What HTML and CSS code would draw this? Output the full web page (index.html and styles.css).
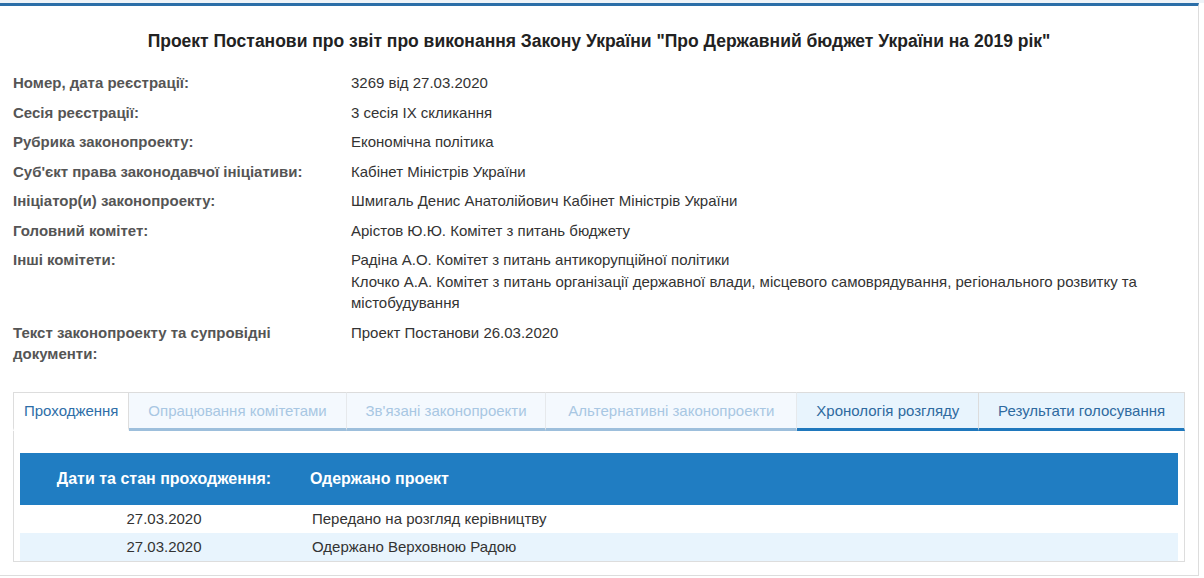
FILE: index.html
```html
<!DOCTYPE html>
<html lang="uk">
<head>
    <meta charset="UTF-8">
    <meta name="viewport" content="width=device-width, initial-scale=1.0">
    <title>Картка законопроекту</title>
    <link rel="stylesheet" href="styles.css">
</head>
<body>
    <div class="page">
        <div class="bill-card">
            <h1 class="bill-title">Проект Постанови про звіт про виконання Закону України "Про Державний бюджет України на 2019 рік"</h1>

            <!-- Основні дані -->
            <div class="bill-info">
                <div class="info-label">Номер, дата реєстрації:</div>
                <div class="info-value">3269 від 27.03.2020</div>

                <div class="info-label">Сесія реєстрації:</div>
                <div class="info-value">3 сесія IX скликання</div>

                <div class="info-label">Рубрика законопроекту:</div>
                <div class="info-value">Економічна політика</div>

                <div class="info-label">Суб'єкт права законодавчої ініціативи:</div>
                <div class="info-value">Кабінет Міністрів України</div>

                <div class="info-label">Ініціатор(и) законопроекту:</div>
                <div class="info-value">Шмигаль Денис Анатолійович Кабінет Міністрів України</div>

                <div class="info-label">Головний комітет:</div>
                <div class="info-value">Арістов Ю.Ю. Комітет з питань бюджету</div>

                <div class="info-label">Інші комітети:</div>
                <div class="info-value">
                    Радіна А.О. Комітет з питань антикорупційної політики<br>
                    Клочко А.А. Комітет з питань організації державної влади, місцевого самоврядування, регіонального розвитку та містобудування
                </div>

                <div class="info-label">Текст законопроекту та супровідні документи:</div>
                <div class="info-value">Проект Постанови 26.03.2020</div>
            </div>

            <!-- Вкладки -->
            <div class="tabs">
                <div class="tab active">Проходження</div>
                <div class="tab muted">Опрацювання комітетами</div>
                <div class="tab muted">Зв'язані законопроекти</div>
                <div class="tab muted wide">Альтернативні законопроекти</div>
                <div class="tab">Хронологія розгляду</div>
                <div class="tab">Результати голосування</div>
            </div>

            <div class="tab-panel">
                <table class="flow-table">
                    <thead>
                        <tr>
                            <th class="col-date">Дати та стан проходження:</th>
                            <th class="col-state">Одержано проект</th>
                        </tr>
                    </thead>
                    <tbody>
                        <tr>
                            <td class="col-date">27.03.2020</td>
                            <td class="col-state">Передано на розгляд керівництву</td>
                        </tr>
                        <tr class="alt">
                            <td class="col-date">27.03.2020</td>
                            <td class="col-state">Одержано Верховною Радою</td>
                        </tr>
                    </tbody>
                </table>
            </div>
        </div>
    </div>
</body>
</html>
```

FILE: styles.css
```css
* {
    box-sizing: border-box;
}

html {
    background: #ffffff;
}

body {
    margin: 0;
    font-family: "Liberation Sans", Arial, sans-serif;
    font-size: 15px;
    color: #333;
    overflow: hidden;
}

.page {
    border-top: 3px solid #eef3f8;
}

.bill-card {
    width: 1200px;
    margin-left: -1px;
    border: 1px solid #dddddd;
    border-top: 3px solid #2b6ea8;
    padding: 0 13px 13px 13px;
}

.bill-title {
    margin: 0;
    padding: 24px 0 20px;
    font-size: 17.5px;
    line-height: 22px;
    font-weight: bold;
    text-align: center;
    color: #222;
}

.bill-info {
    display: grid;
    grid-template-columns: 338px 1fr;
    row-gap: 8px;
    line-height: 21.5px;
}

.info-label {
    font-weight: bold;
    color: #555;
    padding-right: 36px;
}

.info-value {
    color: #333;
    padding-right: 40px;
}

/* Вкладки */
.tabs {
    display: flex;
    margin-top: 27px;
}

.tab {
    flex: 1 1 auto;
    height: 39px;
    line-height: 35px;
    padding: 0 10px;
    text-align: center;
    white-space: nowrap;
    background: #e8f4fd;
    color: #2e6aa0;
    border-top: 1px solid #dcdcdc;
    border-right: 1px solid #dcdcdc;
    border-bottom: 3px solid #1f78bd;
}

.tab.muted {
    background: #f4f9fe;
    color: #a8c7e3;
    border-bottom-color: #9dbfdc;
    border-right-color: #e6e9ec;
}

.tab.wide {
    padding: 0 13px;
}

.tab.active {
    flex: 0 0 auto;
    background: #fff;
    color: #2e6ea8;
    border: 1px solid #dddddd;
    border-bottom: 3px solid #fff;
}

.tab-panel {
    border: 1px solid #dddddd;
    border-top: none;
    padding: 22px 6px 0 6px;
}

.flow-table {
    width: 100%;
    border-collapse: collapse;
}

.flow-table th {
    height: 52px;
    background: #207dc2;
    color: #fff;
    font-size: 16px;
    font-weight: bold;
    text-align: left;
    padding: 0;
}

.flow-table td {
    height: 28px;
    padding: 0;
    color: #333;
}

.flow-table th.col-date,
.flow-table td.col-date {
    width: 288px;
    text-align: center;
}

.flow-table th.col-state {
    padding-left: 2px;
}

.flow-table td.col-state {
    padding-left: 4px;
}

.flow-table tr.alt td {
    background: #e8f4fd;
}
```
